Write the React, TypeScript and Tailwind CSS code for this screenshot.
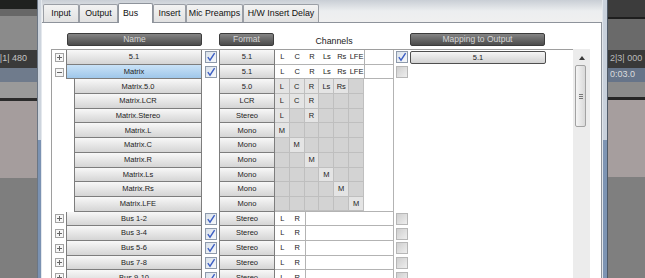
import React from "react";

type Row = {
  name: string;
  fmt: string;
  kind: "top" | "sel" | "sub";
  exp?: "+" | "-";
  chans?: string[];
  grid?: string[];
  check?: boolean;
  map?: "on" | "off";
  mapBtn?: string;
  last?: boolean;
};

const CH = ["L", "C", "R", "Ls", "Rs", "LFE"];
const mono = (i: number) => ["", "", "", "", "", ""].map((_, k) => (k === i ? "M" : ""));

const rows: Row[] = [
  { name: "5.1", fmt: "5.1", kind: "top", exp: "+", chans: CH, check: true, map: "on", mapBtn: "5.1" },
  { name: "Matrix", fmt: "5.1", kind: "sel", exp: "-", chans: CH, check: true, map: "off" },
  { name: "Matrix.5.0", fmt: "5.0", kind: "sub", grid: ["L", "C", "R", "Ls", "Rs", ""] },
  { name: "Matrix.LCR", fmt: "LCR", kind: "sub", grid: ["L", "C", "R", "", "", ""] },
  { name: "Matrix.Stereo", fmt: "Stereo", kind: "sub", grid: ["L", "", "R", "", "", ""] },
  { name: "Matrix.L", fmt: "Mono", kind: "sub", grid: mono(0) },
  { name: "Matrix.C", fmt: "Mono", kind: "sub", grid: mono(1) },
  { name: "Matrix.R", fmt: "Mono", kind: "sub", grid: mono(2) },
  { name: "Matrix.Ls", fmt: "Mono", kind: "sub", grid: mono(3) },
  { name: "Matrix.Rs", fmt: "Mono", kind: "sub", grid: mono(4) },
  { name: "Matrix.LFE", fmt: "Mono", kind: "sub", grid: mono(5), last: true },
  { name: "Bus 1-2", fmt: "Stereo", kind: "top", exp: "+", chans: ["L", "R"], check: true, map: "off" },
  { name: "Bus 3-4", fmt: "Stereo", kind: "top", exp: "+", chans: ["L", "R"], check: true, map: "off" },
  { name: "Bus 5-6", fmt: "Stereo", kind: "top", exp: "+", chans: ["L", "R"], check: true, map: "off" },
  { name: "Bus 7-8", fmt: "Stereo", kind: "top", exp: "+", chans: ["L", "R"], check: true, map: "off" },
  { name: "Bus 9-10", fmt: "Stereo", kind: "top", exp: "+", chans: ["L", "R"], check: true, map: "off" },
];

const tabs = [
  { label: "Input", w: "w-[36px]" },
  { label: "Output", w: "w-[39px]" },
  { label: "Bus", w: "w-[35px]", active: true },
  { label: "Insert", w: "w-[33px]" },
  { label: "Mic Preamps", w: "w-[57px]" },
  { label: "H/W Insert Delay", w: "w-[76px]" },
];

function Check({ on, dim }: { on?: boolean; dim?: boolean }) {
  return (
    <div
      className={
        dim
          ? "w-[12px] h-[12px] border border-[#b7b7b7] bg-linear-to-br from-[#cfcfcf] to-[#eeeeee]"
          : "w-[12px] h-[12px] border border-[#8e9aab] bg-linear-to-br from-[#d9e1ea] to-[#f7f9fb] flex items-center justify-center"
      }
    >
      {on && (
        <svg width="10" height="10" viewBox="0 0 10 10">
          <path d="M1.8 5.2 L4 8.2 L8.6 1.2" stroke="#3d5fc4" strokeWidth="1.4" fill="none" />
        </svg>
      )}
    </div>
  );
}

function Expander({ sign }: { sign: "+" | "-" }) {
  return (
    <div className="relative w-[9px] h-[9px] border border-[#a3a3a3] bg-[#f6f6f6] flex items-center justify-center">
      <div className="w-[5px] h-px bg-[#666]" />
      {sign === "+" && <div className="absolute w-px h-[5px] bg-[#666]" />}
    </div>
  );
}

function TableRow({ r }: { r: Row }) {
  const btn =
    r.kind === "sel"
      ? "bg-linear-to-b from-[#c9e2f7] to-[#9fc7ea]"
      : "bg-linear-to-b from-[#f8f8f8] to-[#d5d5d5]";
  return (
    <div className="flex h-[14.7px] text-[7.5px] text-[#222]">
      {/* expander */}
      <div className="w-[14px] flex items-center pl-[3px]">{r.exp && <Expander sign={r.exp} />}</div>
      {/* name */}
      <div className="w-[136px] flex">
        {r.kind === "sub" && <div className="w-[8px]" />}
        <div className={`flex-1 flex items-center justify-center border-x border-b border-[#7d7d7d] ${btn}`}>
          {r.name}
        </div>
      </div>
      {/* enable */}
      <div className="w-[17px] flex items-center pl-[3px]">{r.check !== undefined && <Check on={r.check} />}</div>
      {/* format */}
      <div className="w-[56px] flex items-center justify-center border-x border-b border-[#7d7d7d] bg-linear-to-b from-[#f8f8f8] to-[#d5d5d5]">
        {r.fmt}
      </div>
      {/* channels */}
      {r.chans ? (
        <div className="w-[119px] flex border-r border-b border-[#b3b3b3] bg-white">
          <div className="flex border-r border-[#b3b3b3]">
            {r.chans.map((c) => (
              <div key={c} className="w-[14.83px] flex items-center justify-center">
                {c}
              </div>
            ))}
          </div>
        </div>
      ) : (
        <div className={`w-[119px] flex border-r border-[#b3b3b3] bg-white ${r.last ? "border-b" : ""}`}>
          <div className="flex">
            {r.grid!.map((c, i) => (
              <div
                key={i}
                className={`w-[14.83px] flex items-center justify-center border-r border-b border-[#bfbfbf] ${
                  c ? "bg-[#e4e4e4]" : "bg-[#d3d3d3]"
                }`}
              >
                {c}
              </div>
            ))}
          </div>
        </div>
      )}
      {/* mapping */}
      <div className="w-[179px] flex items-center pl-[2px] gap-[2px] bg-white">
        {r.map && <Check on={r.map === "on"} dim={r.map === "off"} />}
        {r.mapBtn && (
          <div className="w-[136px] h-[13px] flex items-center justify-center rounded-[2px] border border-[#4f4f4f] bg-linear-to-b from-[#f6f6f6] to-[#d2d2d2]">
            {r.mapBtn}
          </div>
        )}
      </div>
    </div>
  );
}

function Scrollbar() {
  return (
    <div className="w-[17px] bg-[#ececec] flex flex-col items-start">
      <div className="h-[15px] w-full flex items-center justify-center pt-[2px]">
        <svg width="6" height="4" viewBox="0 0 6 4">
          <path d="M0 4 L3 0 L6 4 Z" fill="#3a3a3a" />
        </svg>
      </div>
      <div className="ml-[2px] mt-px w-[11px] h-[62px] rounded-[2px] border border-[#a2a2a2] bg-linear-to-r from-[#f5f5f5] to-[#d9d9d9] flex flex-col items-center justify-center gap-px">
        <div className="w-[4px] h-px bg-[#777]" />
        <div className="w-[4px] h-px bg-[#777]" />
        <div className="w-[4px] h-px bg-[#777]" />
      </div>
    </div>
  );
}

function DarkBtn({ label, w }: { label: string; w: string }) {
  return (
    <div
      className={`${w} h-[13px] rounded-[2px] border border-[#3c3c3c] bg-linear-to-b from-[#858585] to-[#4c4c4c] text-[#d6d6d6] text-[8.5px] flex items-center justify-center`}
    >
      {label}
    </div>
  );
}

function Panel() {
  return (
    <div className="flex-1 bg-white border-t border-r border-[#8e939b] pt-[10px] overflow-hidden">
      <div className="ml-[9px] flex h-[13px] items-center">
        <div className="w-[16px]" />
        <DarkBtn label="Name" w="w-[135px]" />
        <div className="w-[17px]" />
        <DarkBtn label="Format" w="w-[55px]" />
        <div className="w-[120px] text-center text-[8.8px] text-[#222] pt-[5px]">Channels</div>
        <div className="w-[16px]" />
        <DarkBtn label="Mapping to Output" w="w-[135px]" />
      </div>
      <div className="ml-[9px] mt-[3px] flex">
        <div className="w-[522px] border-t border-l border-[#9e9e9e]">
          {rows.map((r) => (
            <TableRow key={r.name} r={r} />
          ))}
        </div>
        <Scrollbar />
      </div>
    </div>
  );
}

function Tabs() {
  return (
    <div className="h-[22px] flex items-end pl-px bg-linear-to-b from-[#c9ced5] via-[#eceef0] to-[#f0f0f0]">
      {tabs.map((t) =>
        t.active ? (
          <div
            key={t.label}
            className={`${t.w} h-[20px] -mb-px relative bg-white border-x border-t border-[#8e939b] rounded-t-[2px] text-[8.8px] text-[#111] pl-[4px] pt-[3px]`}
          >
            {t.label}
          </div>
        ) : (
          <div
            key={t.label}
            className={`${t.w} h-[18px] bg-linear-to-b from-[#f3f3f3] to-[#e1e1e1] border-x border-t border-[#9a9ea5] rounded-t-[2px] text-[8.8px] text-[#111] flex items-center justify-center`}
          >
            {t.label}
          </div>
        )
      )}
    </div>
  );
}

function LeftBg() {
  return (
    <div className="w-[37px] flex flex-col">
      <div className="h-[9px] bg-[#1f211f]" />
      <div className="h-[7px] bg-[#676767]" />
      <div className="h-[34px] bg-[#8b8b8b]" />
      <div className="h-[18px] bg-[#3a3a3a] flex items-center justify-end pr-[10px] overflow-hidden whitespace-nowrap text-[9px] text-[#c4c4c4]">
        |1| 480
      </div>
      <div className="h-[14px] bg-[#6f7b8c]" />
      <div className="h-[16px] bg-[#9a9a9a]" />
      <div className="h-[3px] bg-[#2b2b2b]" />
      <div className="h-[77px] bg-[#a59d9d]" />
      <div className="flex-1 bg-[#7e7e7e]" />
    </div>
  );
}

function RightBg() {
  return (
    <div className="w-[37px] flex flex-col">
      <div className="h-[17px] bg-[#3c3c3c]" />
      <div className="h-[2px] bg-[#1e1e1e]" />
      <div className="h-[31px] bg-[#6a6a6a]" />
      <div className="h-[18px] bg-[#393939] flex items-center pl-[2px] whitespace-nowrap text-[9px] text-[#b9b9b9]">
        2|3| 000
      </div>
      <div className="h-[14px] bg-[#667489] flex items-center pl-[2px] text-[9px] text-[#dcdcdc]">0:03.0</div>
      <div className="h-[15px] bg-[#8b8b8b]" />
      <div className="h-[3px] bg-[#262626]" />
      <div className="h-[77px] bg-[#a69e9e]" />
      <div className="flex-1 bg-[#7f7f7f]" />
    </div>
  );
}

export default function App() {
  return (
    <div className="w-[645px] h-[278px] overflow-hidden flex font-['Liberation_Sans',Arial,sans-serif]">
      <LeftBg />
      <div className="w-[571px] flex">
        {/* left frame */}
        <div className="w-[5px] flex">
          <div className="w-[1px] bg-[#6b7684]" />
          <div className="w-[3px] flex flex-col">
            <div className="h-[140px] bg-[#cdd4dd]" />
            <div className="flex-1 bg-[#7b92b2]" />
          </div>
          <div className="w-[1px] bg-[#e4e8ed]" />
        </div>
        <div className="w-[560px] flex flex-col bg-[#f0f0f0]">
          <Tabs />
          <Panel />
        </div>
        {/* right frame */}
        <div className="w-[6px] flex">
          <div className="w-[1px] bg-[#e1e6ec]" />
          <div className="w-[4px] flex flex-col">
            <div className="h-[140px] bg-[#c9d1dc]" />
            <div className="flex-1 bg-[#7d94b3]" />
          </div>
          <div className="w-[1px] bg-[#4f5a68]" />
        </div>
      </div>
      <RightBg />
    </div>
  );
}
